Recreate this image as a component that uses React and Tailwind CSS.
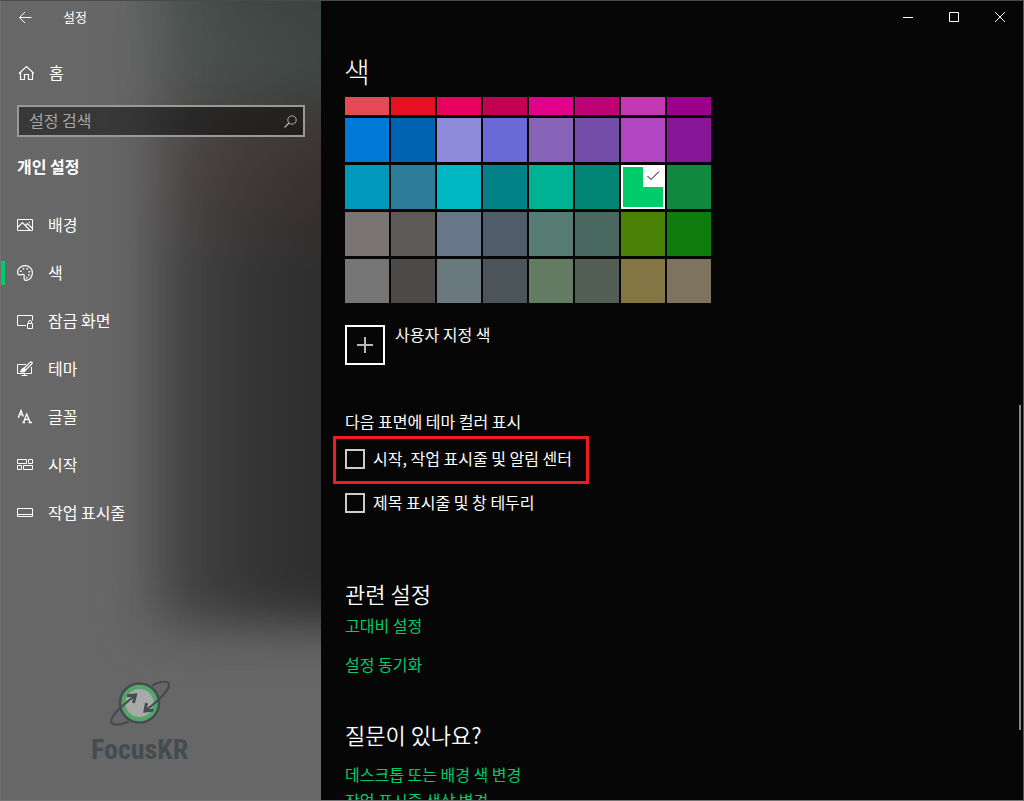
import { useState } from 'react';

const swatches = [
    '#e74856', '#e81123', '#ea005e', '#c30052', '#e3008c', '#bf0077', '#c239b3', '#9a0089',
    '#0078d7', '#0063b1', '#8e8cd8', '#6b69d6', '#8764b8', '#744da9', '#b146c2', '#881798',
    '#0099bc', '#2d7d9a', '#00b7c3', '#038387', '#00b294', '#018574', '#00cc6a', '#10893e',
    '#7a7574', '#5d5a58', '#68768a', '#515c6b', '#567c73', '#486860', '#498205', '#107c10',
    '#767676', '#4c4a48', '#69797e', '#4a5459', '#647c64', '#525e54', '#847545', '#7e735f',
];

const Icon = ({ children, size = 16 }) => (
    <svg width={size} height={size} viewBox={`0 0 ${size} ${size}`} fill="none" stroke="currentColor" className="shrink-0" aria-hidden="true">
        {children}
    </svg>
);

const navItems = [
    {
        label: '배경',
        icon: (
            <>
                <path d="M.5 2.500h15v11H.5z" />
                <path strokeWidth="1.2" d="M1 10l4.500-4.500 7.500 8M8.500 8.500l2-2 5 5" />
                <path d="M12 5.500h1" />
            </>
        ),
    },
    {
        label: '색',
        icon: (
            <>
                <path strokeWidth="1.2" d="M8 .6C3.800.6.600 3.700.600 7.500c0 1.600 1 2.500 2.300 2.500 1.200 0 2-.7 3-.7 1.200 0 1.500.9 1.300 2-.3 1.700-.4 4.100 2 4.100 3.400 0 6.200-3.400 6.200-7.600C15.400 3.700 12.200.600 8 .600z" />
                <path strokeWidth="1.6" d="M3 6.200h1.600M5.700 3.700h1.600M9.500 3.700h1.600M11.500 6.700h1.600M11 10h1.600M9 12.700h1.600" />
            </>
        ),
    },
    {
        label: '잠금 화면',
        icon: (
            <>
                <path d="M9 12.500H.5v-10h15v5" />
                <path d="M10.500 10.500h5v5h-5zM11.500 10.500v-1.500a1.500 1.500 0 0 1 3 0v1.500" />
            </>
        ),
    },
    {
        label: '테마',
        icon: (
            <>
                <path d="M9 3.500H.5v9h14V6M7.500 12.500v2M4.500 14.500h6" />
                <path strokeWidth="1.2" d="M14.800 1.200c-.7-.6-1.300-.2-2 .4L7 7.200l1.700 1.700 5.800-5.700c.7-.7.900-1.400.3-2z" />
                <path fill="currentColor" d="M7 7.200c-2-.2-2.600 1.400-2.700 2.300-.1.600-.6.900-1.300 1 2 1 5.500.8 5.700-1.600z" />
            </>
        ),
    },
    {
        label: '글꼴',
        icon: (
            <g strokeWidth="1.3">
                <path d="M1.500 8L4 1.500l2.300 6M2.300 5.700h3.200M.8 8h1.700" />
                <path d="M6.500 13.500L9.700 5l3.500 8.500M7.500 10.500h4.500M5.500 13.500h2.500M11.500 13.500h3.500" />
            </g>
        ),
    },
    {
        label: '시작',
        icon: <path d="M.5 2.500h9v4h-9zM11.500 2.500h4v4h-4zM.5 8.500h4v4h-4zM6.500 8.500h9v4h-9z" />,
    },
    {
        label: '작업 표시줄',
        icon: <path d="M.5 3.500h15v8H.5zM.5 9.500h15" />,
    },
];

function Watermark() {
    return (
        <div className="ml-[90px] flex flex-col items-center text-[#434c51]">
            <svg width="60" height="46" viewBox="0 0 60 46" fill="none" stroke="currentColor" aria-hidden="true">
                <circle cx="29.500" cy="22" r="16.500" fill="#a9a9a9" stroke="#53a568" strokeWidth="5" />
                <circle cx="29.500" cy="22" r="19.500" strokeWidth="2.500" />
                <path strokeWidth="2.200" d="M42 4.500c8-4 14-4.500 16.500-2.500 2.500 3-4 11.500-13 19.500l-10 8" />
                <path strokeWidth="2.200" d="M19 40.500C11 44 4 44.500 1.800 42-.5 38.500 5 30.500 14 23.500l11-9" />
                <path strokeWidth="3" d="M17 14.700l8.500-.7-2 8" />
                <path strokeWidth="3" d="M36.500 22L35 30l8.500-1" />
            </svg>
            <span className="font-['Roboto_Condensed','Liberation_Sans_Narrow','Roboto',sans-serif] text-[28px] leading-[46px] font-bold">
                FocusKR
            </span>
        </div>
    );
}

function Sidebar({ active, onSelect }) {
    return (
        <aside className="relative w-80 shrink-0 overflow-hidden bg-[#676767]">
            {/* Acrylic backdrop */}
            <div className="absolute -top-20 -right-20 left-[148px] h-[704px] bg-[linear-gradient(to_right,#666666a0,#66666640_25%,#66666618_50%,transparent_70%),linear-gradient(to_bottom,#37413e_10%,#3f4946_20%,#3c3534_30%,#382f2f_38%,#2d2d2d_50%)] blur-[24px]" />

            <div className="relative flex h-full flex-col">
                <div className="flex h-8 items-center gap-[31px] pl-[18px]">
                    <button aria-label="뒤로">
                        <Icon size={13}>
                            <path d="M.5 6.500h12M6 1L.5 6.500 6 12" />
                        </Icon>
                    </button>
                    <span className="text-[13px]">설정</span>
                </div>

                <a href="#home" className="mt-4 flex h-12 items-center gap-[15px] pl-[17px]">
                    <Icon>
                        <path strokeWidth="1.2" d="M1 8.500L8.500 1.500 16 8.500M2.500 7.500v7h4v-5h4v5h4v-7" />
                    </Icon>
                    <span className="pb-0.5">홈</span>
                </a>

                <label className="mx-4 mt-2 flex h-8 items-center border-2 border-[#999999] bg-black/45 pr-1.5 pl-2 text-[#b0b0b0]">
                    <input
                        type="text"
                        placeholder="설정 검색"
                        aria-label="설정 검색"
                        className="min-w-0 flex-1 bg-transparent px-0.5 pb-0.5 outline-none placeholder:text-[#a5a5a5]"
                    />
                    <Icon size={13}>
                        <circle cx="8" cy="5" r="4.200" />
                        <path strokeWidth="1.2" d="M5 8L.5 12.500" />
                    </Icon>
                </label>

                <h2 className="mt-[13px] px-4 leading-8 font-bold">개인 설정</h2>

                <nav className="mt-[19px]">
                    {navItems.map(({ label, icon }) => (
                        <a
                            key={label}
                            href={`#${label}`}
                            onClick={() => onSelect(label)}
                            className="flex h-12 items-center"
                        >
                            <span className={`h-6 w-1 ${active === label ? 'bg-[#00cc6a]' : ''}`} />
                            <span className="ml-3 flex items-center gap-[15px]">
                                <Icon>{icon}</Icon>
                                <span className="pb-0.5">{label}</span>
                            </span>
                        </a>
                    ))}
                </nav>

                <div className="mt-auto flex pb-[27px]">
                    <Watermark />
                </div>
            </div>
        </aside>
    );
}

function WindowControls() {
    return (
        <div className="flex h-8 shrink-0 justify-end">
            <button aria-label="최소화" className="flex w-[46px] items-center justify-center">
                <Icon size={11}><path d="M0 5.500h10" /></Icon>
            </button>
            <button aria-label="최대화" className="flex w-[46px] items-center justify-center">
                <Icon size={11}><path d="M.5.5h9v9h-9z" /></Icon>
            </button>
            <button aria-label="닫기" className="flex w-[46px] items-center justify-center">
                <Icon size={11}><path d="M0 0l10 10M10 0L0 10" /></Icon>
            </button>
        </div>
    );
}

function Swatch({ color, selected, onClick }) {
    return (
        <button
            aria-label={color}
            aria-pressed={selected}
            onClick={onClick}
            className={`flex h-11 w-11 justify-end ${selected ? 'border-2 border-white' : ''}`}
            style={{ backgroundColor: color }}
        >
            {selected && (
                <span className="flex h-5 w-5 justify-center bg-white pt-0.5 text-black">
                    <Icon size={13}>
                        <path d="M.5 7l3.500 3.500L12 2.500" />
                    </Icon>
                </span>
            )}
        </button>
    );
}

const Check = ({ label }) => (
    <label className="flex items-center gap-2">
        <input type="checkbox" className="h-5 w-5 appearance-none border-2 border-[#cccccc] checked:bg-[#00cc6a]" />
        <span className="-mt-0.5">{label}</span>
    </label>
);

export default function App() {
    const [active, setActive] = useState('색');
    const [color, setColor] = useState('#00cc6a');

    return (
        <div className="flex h-screen overflow-hidden border border-t-[#4a4a4a] border-r-[#5a5a5a] border-b-[#777777] border-l-[#707070] bg-[#060606] font-['Noto_Sans_CJK_KR',sans-serif] text-base leading-6 text-white">
            <Sidebar active={active} onSelect={setActive} />

            <main className="flex min-w-0 flex-1 flex-col">
                <WindowControls />
                <h1 className="mt-3.5 mb-0.5 px-[23px] text-[28px] leading-[48px] font-light">색</h1>

                <div className="flex min-h-0 flex-1">
                    <div className="min-w-0 flex-1 overflow-hidden pl-6">
                        {/* Palette, scrolled partly under the title */}
                        <div className="-mt-[26px] grid w-fit grid-cols-8 gap-x-0.5 gap-y-[3px]">
                            {swatches.map((c) => (
                                <Swatch key={c} color={c} selected={c === color} onClick={() => setColor(c)} />
                            ))}
                        </div>

                        <button className="mt-[22px] flex items-start gap-2.5">
                            <span className="flex h-10 w-10 items-center justify-center border-2 border-white text-[#b8b8b8]">
                                <Icon><path strokeWidth="2" d="M8 0v16M0 8h16" /></Icon>
                            </span>
                            <span className="leading-[18px]">사용자 지정 색</span>
                        </button>

                        <h3 className="mt-11">다음 표면에 테마 컬러 표시</h3>
                        <div className="mt-[3px] -ml-3 w-64 border-3 border-[#ed1c24] pt-[9px] pb-[11px] pl-[9px]">
                            <Check label="시작, 작업 표시줄 및 알림 센터" />
                        </div>
                        <div className="mt-2">
                            <Check label="제목 표시줄 및 창 테두리" />
                        </div>

                        <h2 className="mt-[63px] text-[22px] leading-8 font-[350]">관련 설정</h2>
                        <div className="mt-1 flex flex-col items-start gap-[15px] text-[#00cc6a]">
                            <a href="#contrast">고대비 설정</a>
                            <a href="#sync">설정 동기화</a>
                        </div>

                        <h2 className="mt-[42px] text-[22px] leading-8 font-[350]">질문이 있나요?</h2>
                        <div className="mt-3 flex flex-col items-start gap-0.5 text-[#00cc6a]">
                            <a href="#desktop-color">데스크톱 또는 배경 색 변경</a>
                            <a href="#taskbar-color">작업 표시줄 색상 변경</a>
                        </div>
                    </div>

                    {/* Scrollbar thumb */}
                    <div className="mr-0.5 flex w-0.5 flex-col pt-[308px]">
                        <div className="h-[325px] bg-[#858585]" />
                    </div>
                </div>
            </main>
        </div>
    );
}
